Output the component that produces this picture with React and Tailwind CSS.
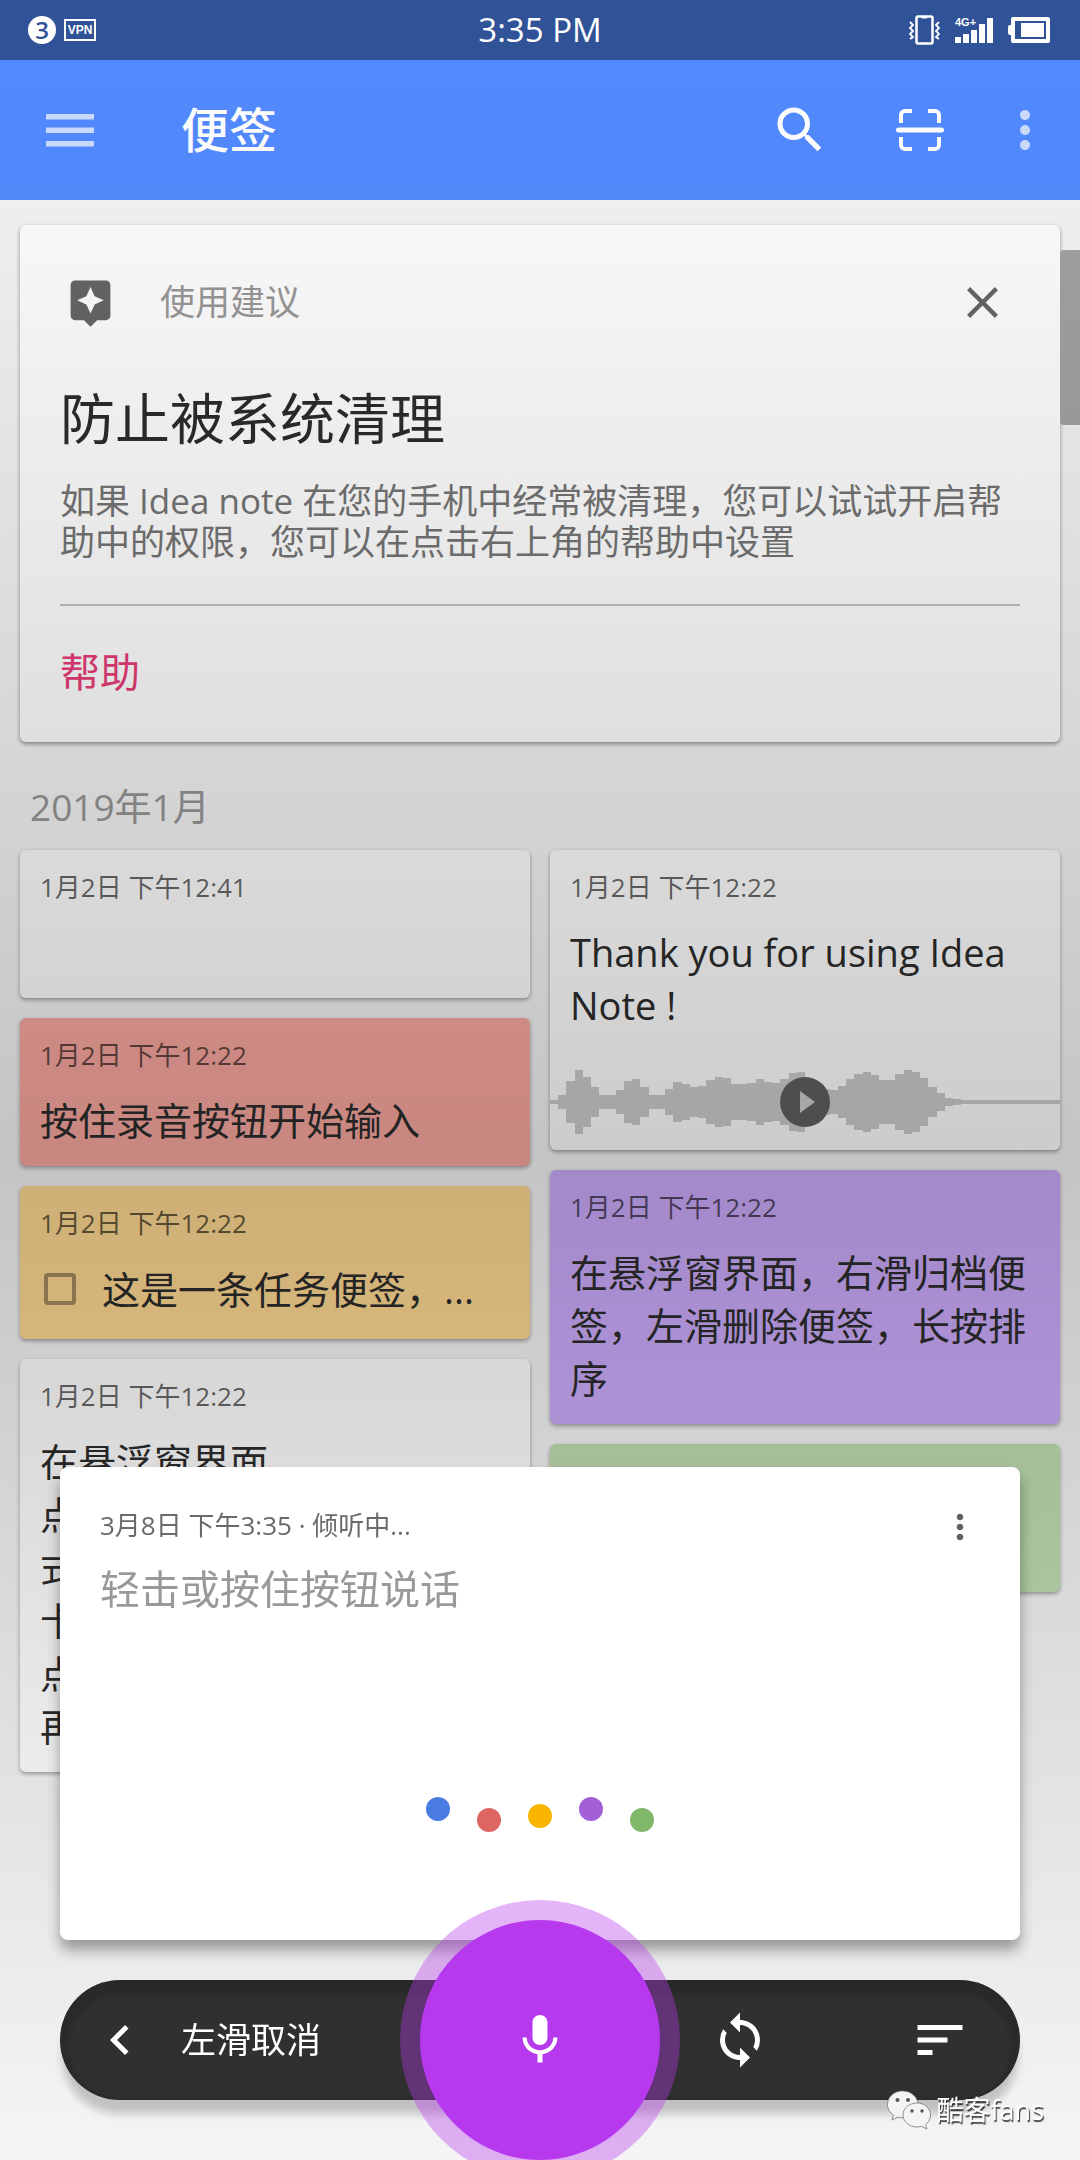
import {
    MdAssistant,
    MdChevronLeft,
    MdClose,
    MdMic,
    MdMoreVert,
    MdSearch,
    MdSort,
    MdSync,
} from 'react-icons/md';

const leftNotes = [
    { id: 'empty', time: '1月2日 下午12:41', tone: 'bg-white', lines: [''] },
    {
        id: 'record',
        time: '1月2日 下午12:22',
        tone: 'bg-[#faa8a0]',
        lines: ['按住录音按钮开始输入'],
    },
    {
        id: 'task',
        time: '1月2日 下午12:22',
        tone: 'bg-[#ffd992]',
        task: '这是一条任务便签，...',
    },
    {
        id: 'floating',
        time: '1月2日 下午12:22',
        tone: 'bg-white',
        lines: ['在悬浮窗界面', '点', '式', '卡', '点', '再'],
    },
];

const rightNotes = [
    {
        id: 'thanks',
        time: '1月2日 下午12:22',
        tone: 'bg-white',
        lines: ['Thank you for using Idea Note !'],
        audio: true,
    },
    {
        id: 'gestures',
        time: '1月2日 下午12:22',
        tone: 'bg-[#cbabfb]',
        lines: ['在悬浮窗界面，右滑归档便签，左滑删除便签，长按排序'],
    },
    { id: 'green', time: '', tone: 'bg-[#c0deb1]', lines: [''] },
];

// half height of every bar in the voice clip
const waveform = [
    2, 7, 21, 32, 25, 15, 7, 7, 12, 21, 23, 15, 7, 7, 13, 20, 18, 15, 16, 22,
    25, 24, 18, 18, 19, 23, 20, 19, 23, 29, 30, 24, 18, 13, 12, 16, 23, 28, 30,
    27, 22, 22, 28, 32, 30, 24, 15, 9, 4, 3, 2, 2, 2, 2, 2, 2, 2, 2, 2, 2, 2, 2,
];

const listeningDots = [
    { id: 'blue', tone: 'bg-[#4a7be0] mb-[11px]' },
    { id: 'red', tone: 'bg-[#dd6663]' },
    { id: 'yellow', tone: 'bg-[#f8b400] mb-1' },
    { id: 'purple', tone: 'bg-[#a35fd6] mb-[11px]' },
    { id: 'green', tone: 'bg-[#7fb76b]' },
];

function StatusBar() {
    return (
        <div className="grid h-15 grid-cols-3 items-center bg-[#305397] px-7 text-white">
            <div className="flex items-center gap-2">
                <span className="flex size-7 items-center justify-center rounded-full bg-white text-[24px] font-semibold leading-none text-[#305397]">
                    3
                </span>
                <span className="flex h-[22px] w-8 items-center justify-center border-2 border-white font-['Liberation_Sans',sans-serif] text-[12px] font-bold leading-none">
                    VPN
                </span>
            </div>
            <div className="text-center text-[33px] leading-10">3:35 PM</div>
            <div className="flex items-center justify-end gap-[15px]">
                <svg viewBox="0 0 31 30" className="h-[30px] w-[31px]" fill="none" stroke="currentColor">
                    <rect x="7.5" y="1.5" width="16" height="27" rx="1.5" strokeWidth="2.5" />
                    <path d="M13 2.5h5" strokeWidth="2" />
                    <path d="M1 7l3 3-3 3 3 3-3 3 3 3-3 2M30 7l-3 3 3 3-3 3 3 3-3 3 3 2" strokeWidth="1.8" />
                </svg>
                <svg viewBox="0 0 38 26" className="h-[26px] w-[38px]" fill="currentColor">
                    <path d="M0 20h6v6H0zM8 17h6v9H8zM16 13h6v13h-6zM24 7h6v19h-6zM32 1h6v25h-6z" />
                    <text x="0" y="9" fontSize="11" fontWeight="700" fontFamily="Liberation Sans, sans-serif">
                        4G+
                    </text>
                </svg>
                <svg viewBox="0 0 42 26" className="mr-[2px] h-[26px] w-[42px]" fill="currentColor">
                    <path
                        fillRule="evenodd"
                        d="M5 0h35a2 2 0 0 1 2 2v22a2 2 0 0 1-2 2H5a2 2 0 0 1-2-2v-6H2a2 2 0 0 1-2-2V10a2 2 0 0 1 2-2h1V2a2 2 0 0 1 2-2zM7 4v18h31V4z"
                    />
                    <path d="M13 6h23v14H13z" />
                </svg>
            </div>
        </div>
    );
}

function AppBar() {
    return (
        <header className="flex h-35 items-center bg-[#528aff] pr-[25px] pl-[46px] text-white">
            <button aria-label="菜单">
                <svg viewBox="0 0 48 33" className="h-[33px] w-12 opacity-70" fill="currentColor">
                    <path d="M0 0h48v5.500H0zM0 13.500h48v5.500H0zM0 27h48v5.500H0z" />
                </svg>
            </button>
            <h1 className="ml-[87px] flex-1 text-[48px] font-medium leading-15">便签</h1>
            <button aria-label="搜索">
                <MdSearch className="size-15" />
            </button>
            <button aria-label="扫描" className="ml-[66px]">
                <svg viewBox="0 0 48 44" className="h-11 w-12" fill="none" stroke="currentColor" strokeWidth="4">
                    <path d="M5 15V7a4 4 0 0 1 4-4h7M32 3h7a4 4 0 0 1 4 4v8M43 29v8a4 4 0 0 1-4 4h-7M16 41H9a4 4 0 0 1-4-4v-8" />
                    <path d="M2.5 22h43" strokeWidth="5" strokeLinecap="round" />
                </svg>
            </button>
            <button aria-label="更多" className="ml-[51px]">
                <MdMoreVert className="size-15 opacity-70" />
            </button>
        </header>
    );
}

function SuggestionCard() {
    return (
        <section className="rounded-md bg-white px-10 pt-10 pb-10 shadow-[0_2px_4px_rgba(0,0,0,0.4)]">
            <div className="flex items-center text-[#666]">
                <MdAssistant className="ml-1 size-[53px]" />
                <span className="ml-[43px] flex-1 text-[35px] leading-[74px] text-[#989898]">使用建议</span>
                <button aria-label="关闭" className="mr-[11px]">
                    <MdClose className="size-[53px]" />
                </button>
            </div>
            <h2 className="mt-11 text-[55px] leading-[70px] text-[#2c2c2c]">防止被系统清理</h2>
            <p className="mt-[27px] text-[35px] leading-[41px] text-[#757575]">
                如果 Idea note 在您的手机中经常被清理，您可以试试开启帮助中的权限，您可以在点击右上角的帮助中设置
            </p>
            <hr className="mt-[42px] border-t-2 border-[#c4c4c4]" />
            <a href="#help" className="mt-9 inline-block text-[40px] leading-[60px] text-[#e83e78]">
                帮助
            </a>
        </section>
    );
}

function AudioClip() {
    return (
        <div className="relative mt-[22px] h-24">
            <svg
                viewBox="0 0 62 96"
                preserveAspectRatio="none"
                shapeRendering="crispEdges"
                className="size-full"
                fill="#cdcdcd"
            >
                {waveform.map((half, index) => (
                    <rect key={index} x={index} y={48 - half} width="1" height={half * 2} />
                ))}
            </svg>
            <button aria-label="播放" className="absolute inset-0 m-auto size-[50px]">
                <svg viewBox="0 0 50 50" className="size-full">
                    <circle cx="25" cy="25" r="25" fill="#606060" />
                    <path d="M20 14l15 11-15 11z" fill="#cdcdcd" />
                </svg>
            </button>
        </div>
    );
}

function NoteCard({ note }) {
    return (
        <article className={`rounded-md shadow-[0_2px_4px_rgba(0,0,0,0.35)] ${note.tone}`}>
            <time className="block h-14 px-5 pt-[19px] text-[26px] leading-9 text-black/60">
                {note.time}
            </time>
            {note.task ? (
                <label className="mt-5 mb-[23px] flex h-[54px] items-center px-6 text-[38px] leading-[54px] text-[#2c2c2c]">
                    <input
                        type="checkbox"
                        className="mr-[26px] size-8 appearance-none rounded border-4 border-black/35"
                    />
                    {note.task}
                </label>
            ) : (
                <div className="mt-5 mb-[19px] px-5 text-[38px] leading-[53px] text-[#2c2c2c]">
                    {note.lines.map((line, index) => (
                        <p key={index} className="min-h-[53px]">
                            {line}
                        </p>
                    ))}
                </div>
            )}
            {note.audio && <AudioClip />}
        </article>
    );
}

function VoicePanel() {
    return (
        <div className="fixed inset-0 flex flex-col justify-end overflow-hidden px-15 pb-15">
            <section className="flex h-[473px] flex-col rounded-lg bg-white px-10 shadow-[0_10px_14px_rgba(0,0,0,0.35)]">
                <div className="flex items-start justify-between pt-[38px]">
                    <p className="text-[26px] leading-10 text-[#6a6a6a]">3月8日 下午3:35 · 倾听中...</p>
                    <button aria-label="更多选项" className="mt-[2px]">
                        <MdMoreVert className="size-10 text-[#606060]" />
                    </button>
                </div>
                <p className="mt-3 text-[40px] leading-[60px] text-[#999]">轻击或按住按钮说话</p>
                <div className="mt-auto mb-[108px] flex items-end justify-center gap-[27px]">
                    {listeningDots.map((dot) => (
                        <span key={dot.id} className={`size-6 rounded-full ${dot.tone}`} />
                    ))}
                </div>
            </section>

            <div className="relative mt-10 flex h-30 items-center rounded-full bg-[#303030] pr-[50px] pl-[30px] text-white shadow-[0_16px_8px_-2px_rgba(0,0,0,0.2),inset_0_6px_4px_8px_rgba(0,0,0,0.14)]">
                <button className="flex items-center text-[35px] leading-[60px]">
                    <MdChevronLeft className="mr-[31px] size-15" />
                    左滑取消
                </button>
                <button aria-label="同步" className="ml-auto">
                    <MdSync className="size-15" />
                </button>
                <button aria-label="排序" className="ml-[140px]">
                    <MdSort className="size-15" />
                </button>
                <button
                    aria-label="录音"
                    className="absolute inset-x-0 -top-15 mx-auto flex size-60 items-center justify-center rounded-full bg-[#b739ee] shadow-[0_0_0_20px_rgba(183,57,238,0.38)]"
                >
                    <MdMic className="size-15" />
                </button>
            </div>
        </div>
    );
}

function Watermark() {
    return (
        <div className="fixed right-9 bottom-[30px] flex items-center gap-[5px] text-[27px] leading-10 text-white [text-shadow:1px_2px_1px_rgba(0,0,0,0.75)]">
            <svg viewBox="0 0 44 40" className="h-10 w-11" fill="#f4f4f4" stroke="#777" strokeWidth="0.8">
                <path d="M15.500 1C7 1 .5 7 .5 14.500c0 4.500 2.300 8 6 10.500L5 30l6-3c1.500.5 3 .7 5 .7C23 27.700 31 22 31 14.500 31 7 24 1 15.500 1z" />
                <path d="M30 13c-8 0-14 5.500-14 12s6 12 14 12c1.500 0 3-.3 4.500-.7L40 39l-1.500-4.500C42 32 43.500 29 43.500 25 43.500 18.500 37.500 13 30 13z" />
                <g fill="#555" stroke="none">
                    <circle cx="10.500" cy="10" r="2" />
                    <circle cx="21" cy="10" r="2" />
                    <circle cx="25" cy="21" r="1.700" />
                    <circle cx="35" cy="21" r="1.700" />
                </g>
            </svg>
            酷客fans
        </div>
    );
}

export default function App() {
    return (
        <div
            lang="zh-CN"
            className="relative min-h-screen bg-[#f5f5f5] font-['Open_Sans','Noto_Sans_CJK_SC',sans-serif]"
        >
            <StatusBar />
            <AppBar />
            <main className="px-5 pt-[25px]">
                <SuggestionCard />
                <h3 className="mt-[38px] ml-[10px] text-[37px] leading-[54px] text-[#979797]">2019年1月</h3>
                <div className="mt-4 grid grid-cols-2 items-start gap-5">
                    <div className="flex flex-col gap-5">
                        {leftNotes.map((note) => (
                            <NoteCard key={note.id} note={note} />
                        ))}
                    </div>
                    <div className="flex flex-col gap-5">
                        {rightNotes.map((note) => (
                            <NoteCard key={note.id} note={note} />
                        ))}
                    </div>
                </div>
            </main>
            <div className="absolute top-[250px] right-0 h-[175px] w-5 rounded-l bg-[#a3a3a3]" />

            {/* scrim behind the voice panel, darkest around the middle */}
            <div className="pointer-events-none absolute inset-x-0 top-15 bottom-0 bg-[linear-gradient(to_bottom,rgba(0,0,0,0),rgba(0,0,0,0.2)_52%,rgba(0,0,0,0))]" />
            <VoicePanel />
            <Watermark />
        </div>
    );
}
